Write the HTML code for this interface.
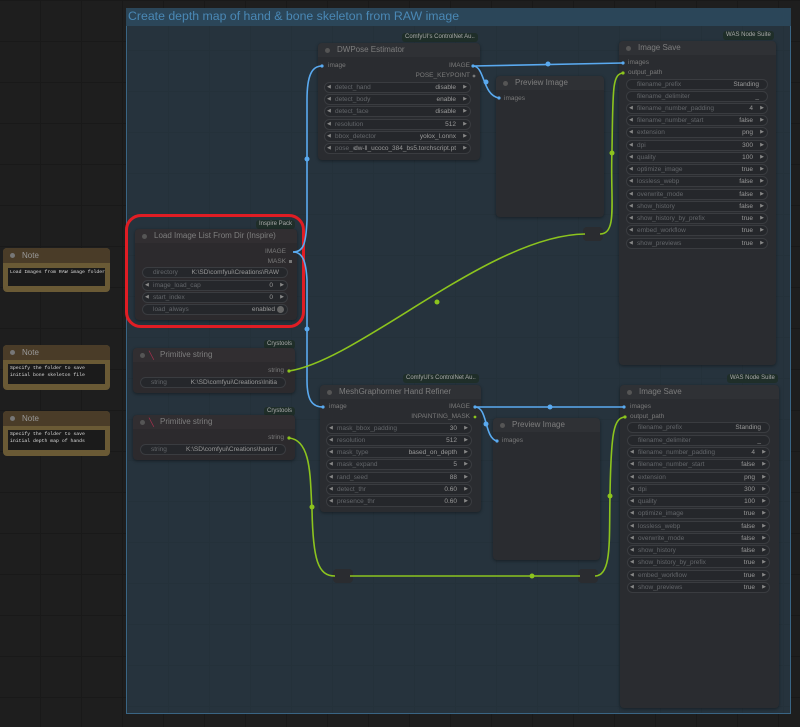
<!DOCTYPE html>
<html><head><meta charset="utf-8"><style>
*{margin:0;padding:0;box-sizing:border-box}
body{width:800px;height:727px;overflow:hidden;position:relative;font-family:"Liberation Sans",sans-serif;
background-color:#1e1e1e;
background-image:linear-gradient(#191919 1px,transparent 1px),linear-gradient(90deg,#191919 1px,transparent 1px);
background-size:41px 41px;background-position:-1px 0}
.a{position:absolute}
.grp{left:126px;top:8px;width:665px;height:706px;background:#26333d;border:1px solid #3a6584;
background-image:linear-gradient(#24313a 1px,transparent 1px),linear-gradient(90deg,#24313a 1px,transparent 1px);background-size:41px 41px}
.gt{left:126px;top:8px;width:665px;height:18px;background:#2b4659;color:#4a88b5;font-size:12.3px;padding-left:2px;line-height:17px}
.n{position:absolute;background:#2a2c30;border-radius:4px;box-shadow:0 1px 3px #0006}
.n .t{height:14px;background:#2f3135;border-radius:4px 4px 0 0;color:#7e7e7e;font-size:8px;line-height:14px;padding-left:19px;position:relative}
.n .t:before{content:"";position:absolute;left:7px;top:5px;width:5px;height:5px;border-radius:50%;background:#555}
.w{position:absolute;height:11px;border:1px solid #3a3c40;border-radius:6px;background:#25272b;font-size:6.5px;color:#63666a;line-height:9px;padding:0 10px 0 10px}
.w b{position:absolute;right:14px;top:0;font-weight:normal;color:#999}
.w:before{content:"◀";position:absolute;left:2px;font-size:5px;color:#888}
.w:after{content:"▶";position:absolute;right:3px;font-size:5px;color:#888}
.w.s:before,.w.s:after{content:""}
.w.s b{right:8px}
.l{position:absolute;font-size:6.5px;color:#7a7a7a}
.r{position:absolute;font-size:6.5px;color:#7a7a7a;text-align:right}
.bd{position:absolute;background:#1f2e29;color:#aaa;font-size:6px;border-radius:3px;padding:1px 3px;line-height:7px}
.note{position:absolute;background:#6a5a35;border-radius:4px}
.note .t{height:15px;background:#4a3c28;border-radius:4px 4px 0 0;color:#999;font-size:8px;line-height:15px;padding-left:19px;position:relative}
.note .t:before{content:"";position:absolute;left:7px;top:5px;width:5px;height:5px;border-radius:50%;background:#777}
.note .x{position:absolute;left:5px;right:5px;background:#1b1b1b;color:#ddd;font-family:"Liberation Mono",monospace;font-size:4.8px;line-height:6.5px;padding:2px 2px;white-space:nowrap}
.rr{position:absolute;width:20px;height:14px;background:#2a2c30;border-radius:4px}
</style></head><body>
<div class="a grp"></div>
<div class="a gt">Create depth map of hand &amp; bone skeleton from RAW image</div>

<div class="note" style="left:3px;top:248px;width:107px;height:44px"><div class="t">Note</div><div class="x" style="top:20px;height:18px">Load Images from RAW image folder</div></div>
<div class="note" style="left:3px;top:345px;width:107px;height:45px"><div class="t">Note</div><div class="x" style="top:19px;height:20px">Specify the folder to save<br>initial bone skeleton file</div></div>
<div class="note" style="left:3px;top:411px;width:107px;height:45px"><div class="t">Note</div><div class="x" style="top:19px;height:20px">Specify the folder to save<br>initial depth map of hands</div></div>

<div class="bd" style="left:402px;top:33px">ComfyUI's ControlNet Au..</div>
<div class="n" style="left:318px;top:43px;width:162px;height:117px"><div class="t">DWPose Estimator</div></div>
<div class="l" style="left:328px;top:62px">image</div>
<div class="r" style="left:380px;top:62px;width:90px">IMAGE</div>
<div class="r" style="left:380px;top:72px;width:90px">POSE_KEYPOINT</div>
<div class="w" style="left:324px;top:82px;width:147px">detect_hand<b>disable</b></div>
<div class="w" style="left:324px;top:94px;width:147px">detect_body<b>enable</b></div>
<div class="w" style="left:324px;top:106px;width:147px">detect_face<b>disable</b></div>
<div class="w" style="left:324px;top:119px;width:147px">resolution<b>512</b></div>
<div class="w" style="left:324px;top:131px;width:147px">bbox_detector<b>yolox_l.onnx</b></div>
<div class="w" style="left:324px;top:143px;width:147px">pose_e<b>dw-ll_ucoco_384_bs5.torchscript.pt</b></div>

<div class="n" style="left:496px;top:76px;width:108px;height:141px"><div class="t">Preview Image</div></div>
<div class="l" style="left:504px;top:95px">images</div>

<div class="bd" style="left:723px;top:31px">WAS Node Suite</div>
<div class="n" style="left:619px;top:41px;width:157px;height:324px"><div class="t">Image Save</div></div>
<div class="l" style="left:628px;top:59px">images</div>
<div class="l" style="left:628px;top:69px">output_path</div>
<div class="w s" style="left:626px;top:79px;width:142px">filename_prefix<b>Standing</b></div>
<div class="w s" style="left:626px;top:91px;width:142px">filename_delimiter<b>_</b></div>
<div class="w" style="left:626px;top:103px;width:142px">filename_number_padding<b>4</b></div>
<div class="w" style="left:626px;top:115px;width:142px">filename_number_start<b>false</b></div>
<div class="w" style="left:626px;top:127px;width:142px">extension<b>png</b></div>
<div class="w" style="left:626px;top:140px;width:142px">dpi<b>300</b></div>
<div class="w" style="left:626px;top:152px;width:142px">quality<b>100</b></div>
<div class="w" style="left:626px;top:164px;width:142px">optimize_image<b>true</b></div>
<div class="w" style="left:626px;top:176px;width:142px">lossless_webp<b>false</b></div>
<div class="w" style="left:626px;top:189px;width:142px">overwrite_mode<b>false</b></div>
<div class="w" style="left:626px;top:201px;width:142px">show_history<b>false</b></div>
<div class="w" style="left:626px;top:213px;width:142px">show_history_by_prefix<b>true</b></div>
<div class="w" style="left:626px;top:225px;width:142px">embed_workflow<b>true</b></div>
<div class="w" style="left:626px;top:238px;width:142px">show_previews<b>true</b></div>

<div class="bd" style="left:256px;top:220px">Inspire Pack</div>
<div class="n" style="left:135px;top:229px;width:162px;height:91px;background:#2c2a2d"><div class="t" style="background:#312e31">Load Image List From Dir (Inspire)</div></div>
<div class="r" style="left:190px;top:248px;width:96px">IMAGE</div>
<div class="r" style="left:190px;top:258px;width:96px">MASK</div>
<div class="w s" style="left:142px;top:267px;width:146px">directory<b>K:\SD\comfyui\Creations\RAW</b></div>
<div class="w" style="left:142px;top:280px;width:146px">image_load_cap<b>0</b></div>
<div class="w" style="left:142px;top:292px;width:146px">start_index<b>0</b></div>
<div class="w s" style="left:142px;top:304px;width:146px">load_always<b style="right:12px">enabled</b></div>
<div class="a" style="left:277px;top:306px;width:7px;height:7px;border-radius:50%;background:#666"></div>
<div class="a" style="left:125px;top:214px;width:180px;height:114px;border:3px solid #e01d24;border-radius:16px"></div>

<div class="bd" style="left:264px;top:340px">Crystools</div>
<div class="n" style="left:133px;top:348px;width:162px;height:45px;background:#2c2a2d"><div class="t" style="background:#312e31;padding-left:27px">Primitive string</div></div>
<div class="a" style="left:149px;top:351px;color:#b03050;font-size:8px">╲</div>
<div class="r" style="left:190px;top:367px;width:94px">string</div>
<div class="w s" style="left:140px;top:377px;width:146px">string<b>K:\SD\comfyui\Creations\Initia</b></div>

<div class="bd" style="left:264px;top:407px">Crystools</div>
<div class="n" style="left:133px;top:415px;width:162px;height:45px;background:#2c2a2d"><div class="t" style="background:#312e31;padding-left:27px">Primitive string</div></div>
<div class="a" style="left:149px;top:418px;color:#b03050;font-size:8px">╲</div>
<div class="r" style="left:190px;top:434px;width:94px">string</div>
<div class="w s" style="left:140px;top:444px;width:146px">string<b>K:\SD\comfyui\Creations\hand r</b></div>

<div class="bd" style="left:403px;top:374px">ComfyUI's ControlNet Au..</div>
<div class="n" style="left:320px;top:385px;width:161px;height:127px"><div class="t">MeshGraphormer Hand Refiner</div></div>
<div class="l" style="left:329px;top:403px">image</div>
<div class="r" style="left:380px;top:403px;width:90px">IMAGE</div>
<div class="r" style="left:380px;top:413px;width:90px">INPAINTING_MASK</div>
<div class="w" style="left:326px;top:423px;width:146px">mask_bbox_padding<b>30</b></div>
<div class="w" style="left:326px;top:435px;width:146px">resolution<b>512</b></div>
<div class="w" style="left:326px;top:447px;width:146px">mask_type<b>based_on_depth</b></div>
<div class="w" style="left:326px;top:459px;width:146px">mask_expand<b>5</b></div>
<div class="w" style="left:326px;top:472px;width:146px">rand_seed<b>88</b></div>
<div class="w" style="left:326px;top:484px;width:146px">detect_thr<b>0.60</b></div>
<div class="w" style="left:326px;top:496px;width:146px">presence_thr<b>0.60</b></div>

<div class="n" style="left:493px;top:418px;width:107px;height:142px"><div class="t">Preview Image</div></div>
<div class="l" style="left:502px;top:437px">images</div>

<div class="bd" style="left:727px;top:374px">WAS Node Suite</div>
<div class="n" style="left:620px;top:385px;width:159px;height:323px"><div class="t">Image Save</div></div>
<div class="l" style="left:630px;top:403px">images</div>
<div class="l" style="left:630px;top:413px">output_path</div>
<div class="w s" style="left:627px;top:422px;width:143px">filename_prefix<b>Standing</b></div>
<div class="w s" style="left:627px;top:435px;width:143px">filename_delimiter<b>_</b></div>
<div class="w" style="left:627px;top:447px;width:143px">filename_number_padding<b>4</b></div>
<div class="w" style="left:627px;top:459px;width:143px">filename_number_start<b>false</b></div>
<div class="w" style="left:627px;top:472px;width:143px">extension<b>png</b></div>
<div class="w" style="left:627px;top:484px;width:143px">dpi<b>300</b></div>
<div class="w" style="left:627px;top:496px;width:143px">quality<b>100</b></div>
<div class="w" style="left:627px;top:508px;width:143px">optimize_image<b>true</b></div>
<div class="w" style="left:627px;top:521px;width:143px">lossless_webp<b>false</b></div>
<div class="w" style="left:627px;top:533px;width:143px">overwrite_mode<b>false</b></div>
<div class="w" style="left:627px;top:545px;width:143px">show_history<b>false</b></div>
<div class="w" style="left:627px;top:557px;width:143px">show_history_by_prefix<b>true</b></div>
<div class="w" style="left:627px;top:570px;width:143px">embed_workflow<b>true</b></div>
<div class="w" style="left:627px;top:582px;width:143px">show_previews<b>true</b></div>

<div class="rr" style="left:583px;top:227px"></div>
<div class="rr" style="left:333px;top:569px"></div>
<div class="rr" style="left:578px;top:569px"></div>

<svg class="a" style="left:0;top:0" width="800" height="727" fill="none" stroke-width="1.6">
<g stroke="#5aaaf0">
<path d="M293 252 C303 252 306 245 307 220 L307 100 C307 75 312 66 322 66"/>
<path d="M293 252 C303 252 306 262 307 280 L307 380 C307 400 312 407 323 407"/>
<path d="M473 66 L623 63"/>
<path d="M473 66 C485 66 482 95 499 98"/>
<path d="M475 407 L624 407"/>
<path d="M475 407 C488 407 484 438 497 441"/>
</g>
<g stroke="#8cc41e">
<path d="M289 371 C360 360 490 235 585 234"/>
<path d="M600 234 C618 234 610 200 612 150 C613 90 612 74 623 73"/>
<path d="M289 438 C312 440 310 480 312 510 C313 560 318 576 335 576"/>
<path d="M350 576 L580 576"/>
<path d="M595 576 C612 576 609 540 610 496 C611 430 614 418 625 417"/>
</g>
<g fill="#5aaaf0"><circle cx="307" cy="159" r="2.5"/><circle cx="548" cy="64" r="2.5"/><circle cx="486" cy="82" r="2.5"/><circle cx="550" cy="407" r="2.5"/><circle cx="486" cy="424" r="2.5"/><circle cx="307" cy="329" r="2.5"/></g>
<g fill="#8cc41e"><circle cx="437" cy="302" r="2.5"/><circle cx="612" cy="153" r="2.5"/><circle cx="312" cy="507" r="2.5"/><circle cx="532" cy="576" r="2.5"/><circle cx="610" cy="496" r="2.5"/></g>
<g fill="#5aaaf0"><circle cx="322" cy="66" r="1.6"/><circle cx="473" cy="66" r="1.6"/><circle cx="623" cy="63" r="1.6"/><circle cx="499" cy="98" r="1.6"/><circle cx="323" cy="407" r="1.6"/><circle cx="475" cy="407" r="1.6"/><circle cx="624" cy="407" r="1.6"/><circle cx="497" cy="441" r="1.6"/></g>
<g fill="#8cc41e"><circle cx="623" cy="73" r="1.6"/><circle cx="289" cy="371" r="1.6"/><circle cx="289" cy="438" r="1.6"/><circle cx="625" cy="417" r="1.6"/><circle cx="475" cy="417" r="1.4"/></g>
<g fill="#777"><circle cx="474" cy="76" r="1.4"/><rect x="289" y="260" width="3" height="3"/></g>
</svg>
</body></html>
